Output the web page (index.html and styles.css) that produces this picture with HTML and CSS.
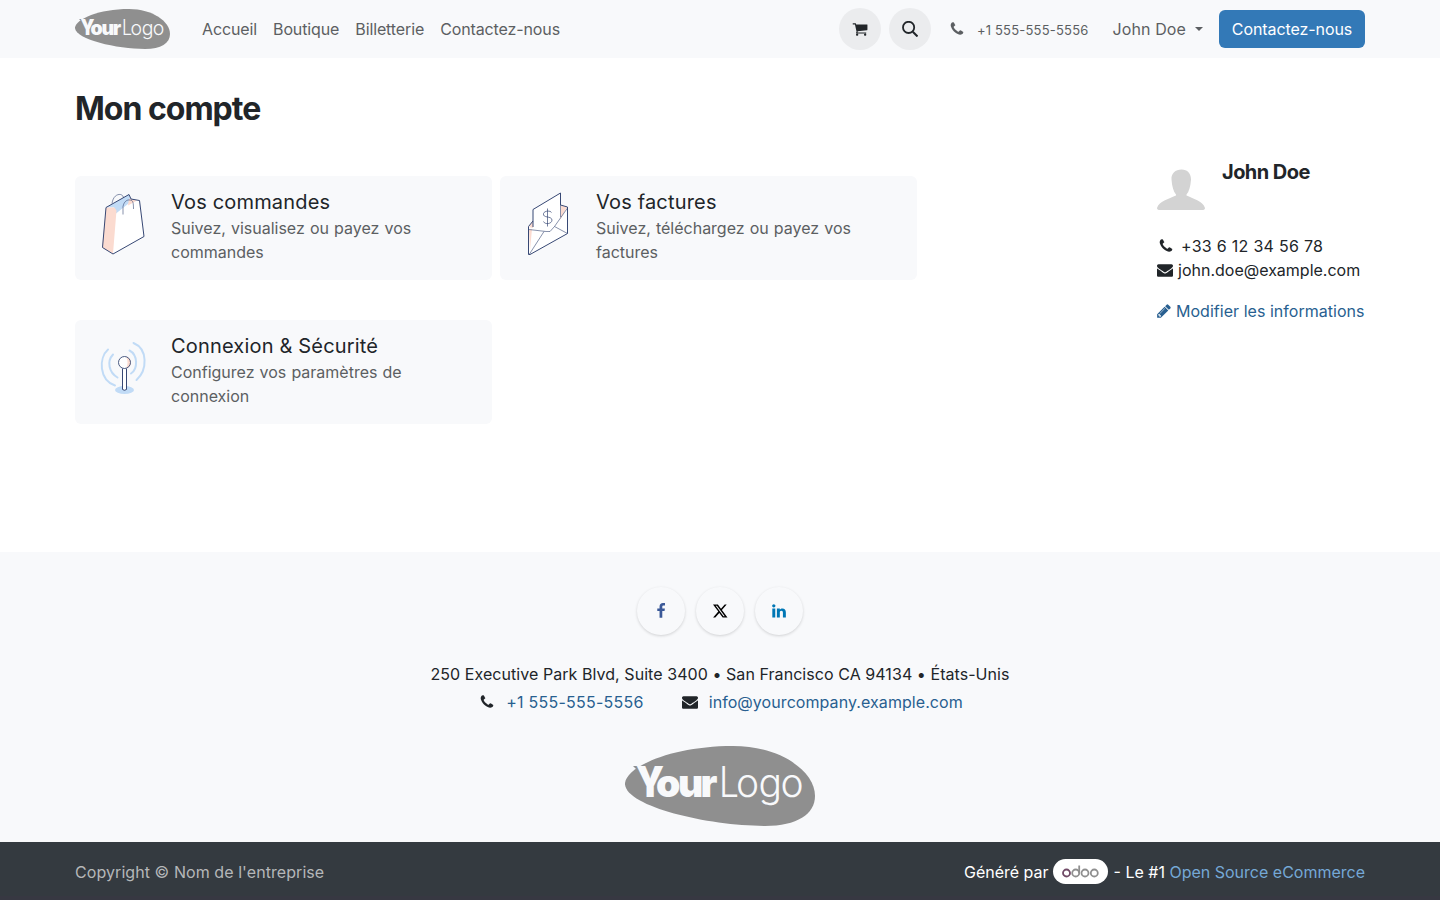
FILE: index.html
```html
<!doctype html>
<html lang="fr">
<head>
    <meta charset="utf-8">
    <meta name="viewport" content="width=device-width, initial-scale=1">
    <title>Mon compte</title>
    <link rel="stylesheet" href="styles.css">
</head>
<body>

<!-- Shared icons -->
<svg class="sprite" aria-hidden="true">
    <symbol id="phone" viewBox="0 0 1792 1792"><path d="M1600 1240q0 27-10 70.5t-21 68.5q-21 50-122 106-94 51-186 51-27 0-53-3.500t-57.500-12.500-47-14.500-55.500-20.500-49-18q-98-35-175-83-127-79-264-216t-216-264q-48-77-83-175-3-9-18-49t-20.500-55.500-14.500-47-12.500-57.500-3.500-53q0-92 51-186 56-101 106-122 25-11 68.500-21t70.500-10q14 0 21 3 18 6 53 76 11 19 30 54t35 63.500 31 53.500q3 4 17.500 25t21.500 35.500 7 28.500q0 20-28.500 50t-62 55-62 53-28.500 46q0 9 5 22.500t8.500 20.500 14 24 11.500 19q76 137 174 235t235 174q2 1 19 11.500t24 14 20.500 8.500 22.500 5q18 0 46-28.500t53-62 55-62 50-28.500q14 0 28.500 7t35.500 21.500 25 17.500q25 15 53.500 31t63.500 35 54 30q70 35 76 53 3 7 3 21z"/></symbol>
    <symbol id="envelope" viewBox="0 0 1792 1792"><path d="M1792 710v794q0 66-47 113t-113 47h-1472q-66 0-113-47t-47-113v-794q44 49 101 87 362 246 497 345 57 42 92.500 65.500t94.500 48 110 24.500h2q51 0 110-24.500t94.500-48 92.500-65.500q170-123 498-345 57-39 100-87zm0-294q0 79-49 151t-122 123q-376 261-468 325-10 7-42.500 31t-54 38.500-52 32.500-57.500 27-50 9h-2q-23 0-50-9t-57.500-27-52-32.500-54-38.500-42.500-31q-91-64-262-182.500t-205-142.500q-62-42-117-115.500t-55-136.500q0-78 41.500-130t118.500-52h1472q65 0 112.500 47t47.500 113z"/></symbol>
</svg>

<header class="navbar">
    <div class="container nav-inner">
        <svg class="logo" viewBox="0 0 190 80">
            <path fill="#8f8f8f" d="M0 37C2 20 48 0 108 0c47 0 82 25 82 50 0 18-18 30-50 30C82 80-2 60 0 37z"/>
            <path fill="#8f8f8f" d="M8 20h9l-3 6z"/>
            <text class="logo-bold" x="11" y="51" textLength="28" lengthAdjust="spacingAndGlyphs">Y</text>
            <text class="logo-bold low" x="31 53 75.500" y="51">our</text>
            <text class="logo-thin" x="94" y="51" textLength="20" lengthAdjust="spacingAndGlyphs">L</text>
            <text class="logo-thin low" x="111 133.500 155.500" y="51">ogo</text>
        </svg>
        <nav class="menu">
            <a href="#">Accueil</a>
            <a href="#">Boutique</a>
            <a href="#">Billetterie</a>
            <a href="#">Contactez-nous</a>
        </nav>
        <div class="nav-right">
            <a class="round-btn" href="#">
                <svg class="icon" viewBox="0 0 1792 1792"><path d="M704 1536q0 52-38 90t-90 38-90-38-38-90 38-90 90-38 90 38 38 90zm896 0q0 52-38 90t-90 38-90-38-38-90 38-90 90-38 90 38 38 90zm128-1088v512q0 24-16.500 42.500t-40.500 21.500l-1044 122q13 60 13 70 0 16-24 64h920q26 0 45 19t19 45-19 45-45 19h-1024q-26 0-45-19t-19-45q0-11 8-31.500t16-36 21.500-40 15.500-29.500l-177-823h-204q-26 0-45-19t-19-45 19-45 45-19h256q16 0 28.500 6.500t19.500 15.500 13 24.500 8 26 5.500 29.500 4.500 26h1201q26 0 45 19t19 45z"/></svg>
            </a>
            <a class="round-btn" href="#">
                <svg class="icon" viewBox="0 0 16 16"><path d="M10.800 10.800l4.700 4.700" stroke="currentColor" stroke-width="2"/><circle cx="6.600" cy="6.400" r="5.600" fill="none" stroke="currentColor" stroke-width="1.800"/></svg>
            </a>
            <a class="nav-phone" href="#"><svg class="icon"><use href="#phone"/></svg><small>+1 555-555-5556</small></a>
            <a class="user" href="#">John Doe <span class="caret"></span></a>
            <a class="btn" href="#">Contactez-nous</a>
        </div>
    </div>
</header>

<main class="container">
    <h1>Mon compte</h1>
    <div class="account">
        <div class="cards">
            <a class="card" href="#">
                <svg class="picture" viewBox="0 0 64 64">
                    <path fill="#fff" d="M14.500 15.500L37 2.500l2 4.500 9 1.500L53 44.500 22 62 11 55.500z"/>
                    <path fill="#c1dbf6" d="M15 15.500L38 2.500l2 7L25 21.500l-2-6z"/>
                    <path fill="#fbdbd0" d="M15 15.500h8.500l2 3-3.500 43-11-6zM38 6.500l8 2-9 5z"/>
                    <path fill="none" stroke="#374874" d="M15 15.500L38 2.500l2 4.500 8.500 1.500L53 44.500 22 62 11.500 55.500z"/>
                    <path fill="none" stroke="#374874" stroke-width=".6" d="M21 11.500c1-7 5-9.500 8.500-9 2 .5 3 2 3 3.500M32 22.500v-8c1-5 4-7 7-6.500 3 0 3.500 3 3.500 9"/>
                </svg>
                <div>
                    <h2>Vos commandes</h2>
                    <p>Suivez, visualisez ou payez vos commandes</p>
                </div>
            </a>
            <a class="card" href="#">
                <svg class="picture" viewBox="0 0 64 64">
                    <path fill="#fff" d="M12.500 34.500L17 29l34.500-14v26.500L14 62.500h-1.500z"/>
                    <path fill="#fbdbd0" d="M13 35l4-7v8zM45 13l6 2-7 13zM13 38l3-1-2 21z"/>
                    <path fill="#fff" d="M17 17.500L44.500 1v22.500L33 39l-16-1z"/>
                    <path fill="none" stroke="#374874" d="M17 35V17.500L44.500 1v12l7 2v26.500L14 62.500h-1.500v-28L17 29"/>
                    <path fill="none" stroke="#374874" stroke-width=".6" d="M44.500 13v12M13 37.500l17 2h4l4.500-5 13-18.500M13.500 62L28 39.500M38.500 34.500l13 7"/>
                    <path fill="none" stroke="#374874" stroke-width=".7" d="M31.500 16.500v18M35.500 20.500c-1-2-7-2-8 1-1 5 8 2 8.500 6.500 0 4-7 5-8.500 1.500"/>
                </svg>
                <div>
                    <h2>Vos factures</h2>
                    <p>Suivez, téléchargez ou payez vos factures</p>
                </div>
            </a>
            <a class="card" href="#">
                <svg class="picture" viewBox="0 0 64 64">
                    <ellipse cx="33.500" cy="54" rx="9.500" ry="4" fill="#c1dbf6"/>
                    <g fill="none" stroke="#c1dbf6" stroke-width="2" stroke-linecap="round">
                        <path d="M17 13.500C7.500 22 8 44 24 49.500M22 18.500c-6.500 7-4 18 4.500 23M42.500 7C57 13 56.500 34 45.500 44M38.500 14.500C47 19 47 33 40 37.500"/>
                    </g>
                    <path fill="#fff" stroke="#374874" d="M31.500 32.500v21q2 1.500 4 0v-21"/>
                    <circle cx="33.500" cy="26.500" r="6" fill="#fff"/>
                    <path fill="#fbdbd0" d="M35 20.500q3 6 0 12 5-2 5-6t-5-6z"/>
                    <circle cx="33.500" cy="26.500" r="6" fill="none" stroke="#374874" stroke-width=".9"/>
                </svg>
                <div>
                    <h2>Connexion &amp; Sécurité</h2>
                    <p>Configurez vos paramètres de connexion</p>
                </div>
            </a>
        </div>

        <aside class="profile">
            <div class="profile-top">
                <svg class="avatar" viewBox="0 0 48 48"><path fill="#d3d3d3" d="M24.500 7.500c6 0 9.500 4 9.500 10-.5 7-2 12-4.500 15v1c6 3 16.500 5.500 18.500 12.500 0 1.500-1 2-3 2H3c-2 0-3-.5-3-2 2-7 13-9.500 19-12.500v-1c-2.500-3-4-8-4.500-15-.5-6 4-10 10-10z"/></svg>
                <h3>John Doe</h3>
            </div>
            <p class="tel"><svg class="icon"><use href="#phone"/></svg><span>+33 6 12 34 56 78</span></p>
            <p class="mail"><svg class="icon"><use href="#envelope"/></svg><span>john.doe@example.com</span></p>
            <a class="edit" href="#"><svg class="icon" viewBox="128 0 1536 1792"><path d="M491 1536l91-91-235-235-91 91v107h128v128h107zm523-928q0-22-22-22-10 0-17 7l-542 542q-7 7-7 17 0 22 22 22 10 0 17-7l542-542q7-7 7-17zm-54-192l416 416-832 832h-416v-416zm683 96q0 53-37 90l-166 166-416-416 166-165q36-38 90-38 53 0 91 38l235 234q37 39 37 91z"/></svg>Modifier les informations</a>
        </aside>
    </div>
</main>

<footer>
    <div class="social">
        <a class="facebook" href="#"><svg class="icon" viewBox="0 0 1792 1792"><path d="M1343 12v264h-157q-86 0-116 36t-30 108v189h293l-39 296h-254v759h-306v-759h-255v-296h255v-218q0-186 104-288.500t277-102.500q147 0 228 12z"/></svg></a>
        <a class="twitter" href="#"><svg class="icon" viewBox="0 0 16 16"><path fill-rule="evenodd" d="M1 1.500h4.900l3.100 4.200 3.700-4.200h2l-4.800 5.600 5.600 7.400h-4.800L7.300 10l-4 4.500h-2.200l5.200-6zM3.700 2.700l7.800 10.600h1.200L4.900 2.700z"/></svg></a>
        <a class="linkedin" href="#"><svg class="icon" viewBox="0 0 1792 1792"><path d="M477 625v991h-330v-991h330zm21-306q1 73-50.500 122t-135.500 49h-2q-82 0-132-49t-50-122q0-74 51.500-122.500t134.500-48.500 133 48.500 51 122.500zm1166 729v568h-329v-530q0-105-40.500-164.500t-126.500-59.500q-63 0-105.500 34.500t-63.500 85.500q-11 30-11 81v553h-329q2-399 2-647t-1-296l-1-48h329v144h-2q20-32 41-56t56.500-52 87-43.500 114.500-15.500q171 0 275 113.500t104 332.500z"/></svg></a>
    </div>
    <p class="address">250 Executive Park Blvd, Suite 3400 • San Francisco CA 94134 • États-Unis</p>
    <div class="contact">
        <span><svg class="icon"><use href="#phone"/></svg><a class="contact-tel" href="#">+1 555-555-5556</a></span>
        <span><svg class="icon"><use href="#envelope"/></svg><a href="#">info@yourcompany.example.com</a></span>
    </div>
    <svg class="footer-logo" viewBox="0 0 190 80">
        <path fill="#8f8f8f" d="M0 37C2 20 48 0 108 0c47 0 82 25 82 50 0 18-18 30-50 30C82 80-2 60 0 37z"/>
        <path fill="#8f8f8f" d="M8 20h9l-3 6z"/>
        <text class="logo-bold" x="11" y="51" textLength="28" lengthAdjust="spacingAndGlyphs">Y</text>
        <text class="logo-bold low" x="31 53 75.500" y="51">our</text>
        <text class="logo-thin" x="94" y="51" textLength="20" lengthAdjust="spacingAndGlyphs">L</text>
        <text class="logo-thin low" x="111 133.500 155.500" y="51">ogo</text>
    </svg>
</footer>

<div class="copyright">
    <div class="container copyright-inner">
        <span class="company">Copyright © Nom de l'entreprise</span>
        <div class="powered">
            <span>Généré par</span>
            <span class="odoo">
                <svg viewBox="0 0 37 13" fill="none" stroke="#8f8f8f" stroke-width="1.800">
                    <circle cx="4.500" cy="8" r="3.500" stroke="#714b67"/>
                    <circle cx="13.700" cy="8" r="3.500"/>
                    <path d="M17.200 8V.5"/>
                    <circle cx="23" cy="8" r="3.500"/>
                    <circle cx="32.300" cy="8" r="3.500"/>
                </svg>
            </span>
            <span>- Le #1 <a href="#">Open Source eCommerce</a></span>
        </div>
    </div>
</div>

</body>
</html>
```
FILE: styles.css
```css
* {
    box-sizing: border-box;
}

body {
    margin: 0;
    height: 900px;
    display: flex;
    flex-direction: column;
    overflow: hidden;
    font-family: Inter, sans-serif;
    font-size: 16px;
    line-height: 24px;
    color: #212529;
    background: #fff;
}

a {
    color: inherit;
    text-decoration: none;
}

h1, h2, h3, p {
    margin: 0;
}

.sprite {
    position: absolute;
    width: 0;
    height: 0;
}

.container {
    width: 1290px;
    margin: 0 auto;
}

.icon {
    width: 16px;
    height: 16px;
    fill: currentColor;
    flex: none;
}

/* Navbar */
.navbar {
    height: 58px;
    background: #f8f9fb;
    flex: none;
}

.nav-inner {
    height: 58px;
    display: flex;
    align-items: center;
}

.logo {
    width: 95px;
    height: 40px;
}

.logo-bold,
.logo-thin {
    font-family: Inter, sans-serif;
    font-size: 42px;
    line-height: 1;
    fill: #f8f9fb;
}

.logo-bold {
    font-weight: 900;
}

.logo-thin {
    font-weight: 300;
}

.low {
    font-size: 39px;
}

.menu {
    display: flex;
    gap: 16px;
    margin-left: 32px;
    color: #5c5f62;
    letter-spacing: -0.12px;
}

.nav-right {
    margin-left: auto;
    display: flex;
    align-items: center;
    color: #5c5f62;
}

.round-btn {
    width: 42px;
    height: 42px;
    margin-right: 8px;
    border-radius: 50%;
    background: #ebecee;
    color: #212529;
    display: flex;
    align-items: center;
    justify-content: center;
}

.nav-phone {
    display: flex;
    align-items: center;
    gap: 12px;
    margin-left: 10px;
}

.nav-phone small {
    font-size: 13px;
    padding-top: 2px;
    letter-spacing: 0.2px;
}

.user {
    margin-left: 24px;
    display: flex;
    align-items: center;
    letter-spacing: 0.1px;
}

.caret {
    margin-left: 9px;
    border: 4px solid transparent;
    border-top-color: currentColor;
    border-bottom: 0;
}

.btn {
    width: 146px;
    margin-left: 16px;
    padding: 7px 0;
    border-radius: 6px;
    background: #3379b7;
    color: #fff;
    text-align: center;
    letter-spacing: -0.08px;
}

/* Account */
main {
    flex: none;
    height: 494px;
    padding-top: 32px;
}

h1 {
    font-size: 32px;
    line-height: 38px;
    font-weight: 700;
    letter-spacing: -1px;
}

.account {
    display: flex;
    justify-content: space-between;
    margin-top: 34px;
}

.cards {
    display: grid;
    grid-template-columns: 417px 417px;
    column-gap: 8px;
    row-gap: 40px;
    padding-top: 14px;
    align-content: start;
}

.card {
    height: 104px;
    padding: 16px;
    display: flex;
    gap: 16px;
    border-radius: 6px;
    background: #f8f9fb;
}

.picture {
    width: 64px;
    height: 64px;
    flex: none;
}

.card h2 {
    font-size: 20px;
    line-height: 24px;
    font-weight: 400;
    letter-spacing: 0.18px;
    margin-top: -2px;
    padding-bottom: 2px;
}

.card p {
    color: #5c5f62;
    word-spacing: 0.6px;
}

.profile {
    width: 208px;
}

.profile-top {
    display: flex;
    gap: 17px;
    margin-bottom: 24px;
}

.avatar {
    width: 48px;
    height: 48px;
}

.profile h3 {
    font-size: 20px;
    line-height: 24px;
    font-weight: 700;
    letter-spacing: -0.55px;
    margin-top: -2px;
}

.profile p,
.edit {
    display: flex;
    align-items: center;
    gap: 5px;
}

.profile .tel {
    padding-left: 1px;
    gap: 7px;
    letter-spacing: 0.28px;
}

.edit {
    margin-top: 17px;
    color: #285f90;
    letter-spacing: 0.03px;
    white-space: nowrap;
}

.edit .icon {
    width: 14px;
}

/* Footer */
footer {
    flex: none;
    height: 290px;
    padding-top: 35px;
    display: flex;
    flex-direction: column;
    align-items: center;
    background: #f8f9fb;
}

.social {
    display: flex;
    gap: 11px;
}

.social a {
    width: 48px;
    height: 48px;
    border-radius: 50%;
    display: flex;
    align-items: center;
    justify-content: center;
    box-shadow: 0 1px 3px rgba(0, 0, 0, 0.16);
}

.facebook {
    color: #3b5998;
}

.twitter {
    color: #000;
}

.linkedin {
    color: #0077b5;
}

.address {
    margin-top: 27px;
    letter-spacing: 0.06px;
}

.contact {
    display: flex;
    gap: 38px;
    margin-top: 4px;
    padding-left: 2px;
}

.contact span {
    display: flex;
    align-items: center;
    gap: 11px;
}

.contact a {
    color: #285f90;
    letter-spacing: 0.07px;
}

.contact .contact-tel {
    letter-spacing: 0.25px;
}

.footer-logo {
    width: 190px;
    height: 80px;
    margin-top: 32px;
}

.copyright {
    flex: 1;
    background: #343a40;
    color: #fff;
    border-bottom: 4px solid #373842;
}

.copyright-inner {
    display: flex;
    justify-content: space-between;
    padding-top: 17px;
}

.company {
    color: #b5b7b9;
    padding-top: 1px;
    letter-spacing: 0.07px;
}

.powered {
    display: flex;
    align-items: center;
    gap: 5px;
}

.powered a {
    color: #75a8d6;
}

.odoo {
    width: 55px;
    height: 25px;
    margin: 0 1px 0 -1px;
    border-radius: 13px;
    background: #fff;
    display: flex;
    align-items: center;
    justify-content: center;
}

.odoo svg {
    width: 37px;
    height: 13px;
}
```
